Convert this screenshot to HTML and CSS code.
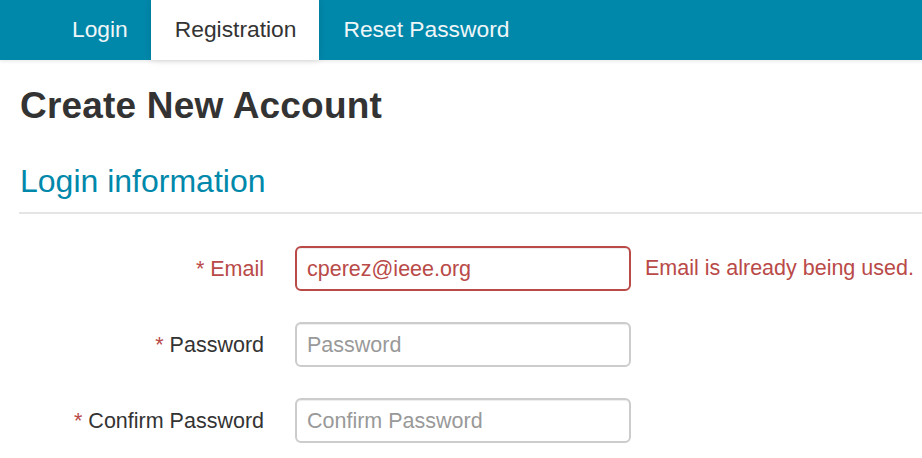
FILE: index.html
```html
<!DOCTYPE html>
<html lang="en">
<head>
<meta charset="utf-8">
<title>Create New Account</title>
<link rel="stylesheet" href="styles.css">
</head>
<body>
<nav class="topnav">
  <a class="tab" href="#">Login</a>
  <a class="tab active" href="#">Registration</a>
  <a class="tab" href="#">Reset Password</a>
</nav>
<main class="page">
  <h1 class="title">Create New Account</h1>
  <form class="form">
    <div class="group">
      <h2 class="legend">Login information</h2>
      <div class="row has-error">
        <label class="label" for="email"><span class="req">*</span> Email</label>
        <input class="input" id="email" type="text" value="cperez@ieee.org">
        <span class="help">Email is already being used.</span>
      </div>
      <div class="row">
        <label class="label" for="pw"><span class="req">*</span> Password</label>
        <input class="input" id="pw" type="password" placeholder="Password">
      </div>
      <div class="row">
        <label class="label" for="pw2"><span class="req">*</span> Confirm Password</label>
        <input class="input" id="pw2" type="password" placeholder="Confirm Password">
      </div>
    </div>
  </form>
</main>
</body>
</html>
```
FILE: styles.css
```css
* { box-sizing: border-box; }
html, body { margin: 0; padding: 0; background: #fff; }
body {
  font-family: "Liberation Sans", Arial, sans-serif;
  color: #333;
  overflow: hidden;
}
.topnav {
  display: flex;
  height: 60px;
  background: #0088ab;
  padding-left: 48px;
  box-shadow: 0 2px 3px rgba(0,0,0,0.07);
}
.tab {
  display: block;
  padding: 0 23px 0 24px;
  line-height: 58px;
  font-size: 22.8px;
  color: #f0f6f8;
  text-decoration: none;
}
.tab.active {
  background: #fff;
  color: #333;
  box-shadow: 0 0 8px rgba(0,0,0,0.12);
  position: relative;
}
.page { padding: 0 0 0 20px; }
.title {
  margin: 26px 0 0;
  font-size: 37px;
  letter-spacing: 0.2px;
  line-height: 40px;
  font-weight: bold;
  color: #333;
}
.form { margin: 0; }
.group { margin: 0; padding: 0; }
.legend {
  margin: 37px 0 0 -1px;
  padding: 0 0 13px 1px;
  font-size: 32px;
  line-height: 36px;
  font-weight: normal;
  color: #0088ab;
  border-bottom: 2px solid #e5e5e5;
}
.row {
  display: grid;
  grid-template-columns: 244px 336px auto;
  column-gap: 31px;
  align-items: center;
  height: 45px;
  margin-top: 31px;
  font-size: 21.5px;
}
.legend + .row { margin-top: 32px; }
.row .help { margin-left: -17px; }
.label {
  text-align: right;
  color: #333;
  padding-top: 1px;
}
.req { color: #b94a48; }
.input {
  width: 336px;
  height: 45px;
  padding: 1px 10px 0;
  font-family: "Liberation Sans", Arial, sans-serif;
  font-size: 21.5px;
  color: #555;
  border: 2px solid #ccc;
  border-radius: 6px;
  box-shadow: inset 0 1px 1px rgba(0,0,0,0.075);
  background: #fff;
  outline: none;
}
.input::placeholder { color: #999; }
.has-error .label { color: #b94a48; }
.has-error .input { border-color: #b94a48; color: #b94a48; }
.help { color: #b94a48; white-space: nowrap; }
```
